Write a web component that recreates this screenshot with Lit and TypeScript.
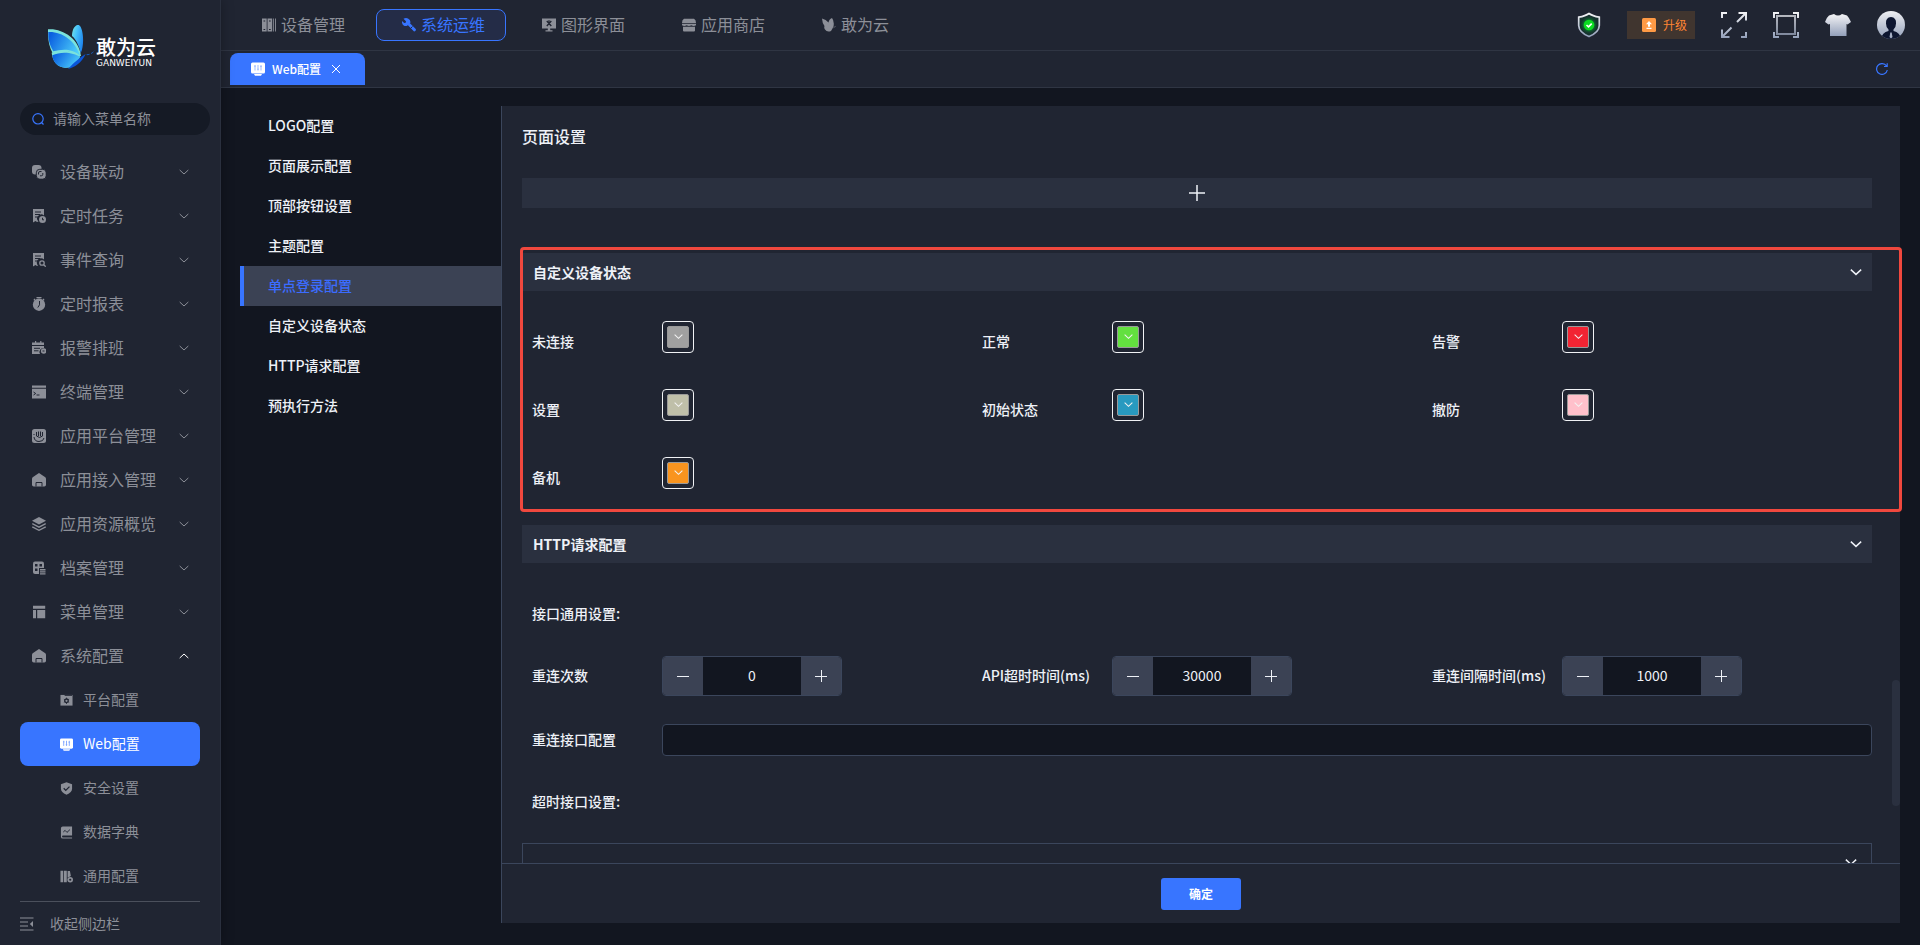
import { LitElement, html, svg, css } from "lit";
import { customElement, state } from "lit/decorators.js";
import { classMap } from "lit/directives/class-map.js";
import { styleMap } from "lit/directives/style-map.js";

const svgIcon = (body: unknown, size = 14, box = "0 0 14 14") =>
  html`<svg class="icon" width=${size} height=${size} viewBox=${box} fill="currentColor" aria-hidden="true">${body}</svg>`;

/* Filled 14-unit glyphs; details inside a shape use class "cs"/"cf" (background colour). */
const glyphs: Record<string, unknown> = {
  link: svg`<rect x="0" y="0" width="9.500" height="9.500" rx="3"/><rect class="cutline" x="4.300" y="4.300" width="9.900" height="9.900" rx="3.500"/><path class="cs" d="M6.500 9.500V8q0-1.500 1.500-1.500h1.500M10.800 8v1.300q0 1.500-1.500 1.500H8"/>`,
  task: svg`<path d="M1 0h11v6.500A4 4 0 0 0 6.500 12.500L5 13l-1.500-1-2.500 1.500z"/><path class="cs" d="M3 3h6M3 5.500h5M3 8h3"/><circle cx="10.500" cy="10.500" r="3.500"/><path class="cs" d="M10.500 8.800v2h1.500"/>`,
  query: svg`<path d="M1 0h11v6.500A4 4 0 0 0 6 12.500L5 13l-1.500-1-2.500 1.500z"/><path class="cs" d="M3 3h6M3 5.500h5M3 8h3"/><circle class="ls" cx="10" cy="10" r="2.200"/><path class="ls" d="M11.700 11.700l2 2"/>`,
  timer: svg`<path d="M4.500 0h5v1.200h-5zM1.500 2.500l1-1 1 1-1 1zM10.500 2.500l1-1 1 1-1 1z"/><circle cx="7" cy="7.700" r="6.200"/><path class="cs" d="M7.500 4v3.800L5.800 10.500"/>`,
  shift: svg`<path d="M0 1.500h3V0h1.200v1.500h4V0h1.200v1.500H12V7A4 4 0 0 0 8 13H0z"/><path class="cs" d="M0 4.500h12M2 7.300h6M2 9.800h4.500"/><circle cx="11.700" cy="10" r="2.800"/><path class="cs" d="M10.500 10h2"/>`,
  terminal: svg`<path d="M0 .5h14v2.300H0zM0 3.800h14v9.700H0z"/><path class="cs" d="M1.500 7l2.200 1.500-2.200 1.500M4.500 10h3"/>`,
  platform: svg`<rect width="14" height="14" rx="2.500"/><path class="cs" d="M4.500 3v4M6.500 2.500V7M8.500 2.500V7M10.500 3v4M4.500 7q3 3 6 0M2 8q.5 4.500 5 4.500t5-3.500M2 5v1"/>`,
  home: svg`<path d="M7 0l6.300 4.300q.7.500.7 1.500v6q0 1.700-1.700 1.700H1.700Q0 13.500 0 11.800v-6q0-1 .7-1.500z"/><path class="cs" d="M4 13.500v-4h6v4"/>`,
  layers: svg`<path d="M7 0l7 3.700-7 3.700-7-3.700z"/><path class="ls" d="M.3 6.700L7 10.200l6.700-3.500M.3 9.800L7 13.300l6.700-3.500"/>`,
  archive: svg`<rect x="1" y=".5" width="11" height="12.500" rx="2"/><path class="cf" d="M3 3h2.500v2.500H3zM7.500 3H10v2.500H7.500zM3 7.500h2.500V10H3zM7 7h7v7H7z"/><path d="M8 8h5.500v1.600H8zM8 10.200h5.500v1.400H8zM8 12.200h5.500v1.300H8z"/>`,
  menu: svg`<path d="M1 .7h12.200v3H1zM1 5h3v8.300H1zM5.200 5h8v8.300h-8z"/>`,
  gearbox: svg`<path d="M.5 1h13v11.500H.5z"/><path class="cs" d="M5 1.500h8"/><circle class="cs2" cx="7" cy="7.300" r="1.900"/><path class="cs" d="M7 4v1.200M7 9.400v1.200M4.200 5.700l1 .6M8.800 8.300l1 .6M4.200 8.900l1-.6M8.800 6.300l1-.6"/>`,
  web: svg`<rect x="0" y=".5" width="14" height="11" rx="1.500"/><path d="M3 12h8l-1 1.700H4z"/><path class="cs" d="M4 3v5.500M7 3v5.500M10 3v5.500M3.200 4.200h1.600M6.200 7.200h1.600M9.200 4.500h1.600"/>`,
  shield: svg`<path d="M7 .3l6 2v5q0 4-6 6.400-6-2.400-6-6.400v-5z"/><path class="cs2" d="M4 6.800l2.200 2.200L10.200 5"/>`,
  dict: svg`<path d="M3 .5h10v9.800H3.200a1 1 0 0 0 0 2H13v1.200H3A2 2 0 0 1 1 11.500v-9Q1 .5 3 .5z"/><path class="cs" d="M3.500 6.500l2-1.800 2 2.200 3.200-3"/>`,
  books: svg`<path d="M.5.8h3v12.500h-3zM4.300.8h3v12.500h-3zM8.200 1h2.500l1 5.500-3.500 1.800z"/><circle cx="11" cy="10.500" r="3"/><circle class="cf" cx="11" cy="10.500" r="1.200"/>`,
  device: svg`<path d="M0 .5h4.700v13H0zM5.500.5h4.700v13H5.500zM11.200.5H12v13h-.8zM13 .5h.9v13H13z"/><path class="cs" d="M1.500 3h1.700M7 3h1.700M1.500 11.500h1.700M7 11.500h1.700"/>`,
  wrench: svg`<path d="M1.500.8L4 3.200l-.3 1.600-1.500.3L0 3q-.4 3.400 2 4.700 1.700.7 3.200.1l1.500-1.500L8.500 4.500Q8.600 1.500 6 .4 3.500-.4 1.500.8z"/><path d="M5.500 6.800l2-2 6 6q1 1.200-.2 2.200t-2-.2z"/><path class="cs" d="M8.500 10.500l2-2"/>`,
  graphic: svg`<path d="M0 .5h14v10H8.200v1.800H10.500v1.200h-7v-1.200h2.300v-1.800H0z"/><path class="cs2" d="M4.800 3l4.500 5M9.300 3L4.800 8M7 2.300v1.500"/>`,
  store: svg`<path d="M2 .8h10q2 1 2 4.200H0Q0 1.800 2 .8zM0 5.800h14v1.500q-2.300 1.500-4.700 0-2.300 1.500-4.600 0-2.400 1.500-4.700 0zM1 8.800h12v3.700q0 1-1 1H2q-1 0-1-1z"/>`,
  bird: svg`<path d="M0 .5Q4 1.300 6.500 4.500 7 1 10 0q2.500 3 1.500 8.500L10.200 11 9 13q-4 1.500-6-1.500Q1.800 10 2.500 8 .3 5.500 0 .5z"/><path class="faint" d="M10.500 10.500Q12 8 14.500 7.800q-1 1.800-4 2.700z"/>`,
};

const glyph = (name: string, size = 14) => svgIcon(glyphs[name], size);

const chevron = (w: number, up = false, stroke = 1) => html`
  <svg class="icon" width=${w} height=${w} viewBox="0 0 10 10" fill="none" stroke="currentColor" stroke-width=${stroke} aria-hidden="true">
    <path d=${up ? "M.7 7L5 3l4.300 4" : "M.7 3L5 7l4.300-4"}></path>
  </svg>`;

interface MenuEntry { label: string; icon: string; open?: boolean; }

const MENU: MenuEntry[] = [
  { label: "设备联动", icon: "link" },
  { label: "定时任务", icon: "task" },
  { label: "事件查询", icon: "query" },
  { label: "定时报表", icon: "timer" },
  { label: "报警排班", icon: "shift" },
  { label: "终端管理", icon: "terminal" },
  { label: "应用平台管理", icon: "platform" },
  { label: "应用接入管理", icon: "home" },
  { label: "应用资源概览", icon: "layers" },
  { label: "档案管理", icon: "archive" },
  { label: "菜单管理", icon: "menu" },
  { label: "系统配置", icon: "home", open: true },
];

const SUBMENU: MenuEntry[] = [
  { label: "平台配置", icon: "gearbox" },
  { label: "Web配置", icon: "web" },
  { label: "安全设置", icon: "shield" },
  { label: "数据字典", icon: "dict" },
  { label: "通用配置", icon: "books" },
];

const TOP_NAV: MenuEntry[] = [
  { label: "设备管理", icon: "device" },
  { label: "系统运维", icon: "wrench" },
  { label: "图形界面", icon: "graphic" },
  { label: "应用商店", icon: "store" },
  { label: "敢为云", icon: "bird" },
];

const SECTIONS = ["LOGO配置", "页面展示配置", "顶部按钮设置", "主题配置", "单点登录配置", "自定义设备状态", "HTTP请求配置", "预执行方法"];

const STATUSES = [
  { label: "未连接", color: "#a0a0a0" },
  { label: "正常", color: "#63e03f" },
  { label: "告警", color: "#f22433" },
  { label: "设置", color: "#bfbfa9" },
  { label: "初始状态", color: "#289ac0" },
  { label: "撤防", color: "#ffc0cb" },
  { label: "备机", color: "#f9941e" },
];

const NUMBERS = [
  { label: "重连次数", value: 0 },
  { label: "API超时时间(ms)", value: 30000 },
  { label: "重连间隔时间(ms)", value: 1000 },
];

const base = css`
  *, *::before, *::after { box-sizing: border-box; }
  button, input { font: inherit; color: inherit; margin: 0; padding: 0; border: 0; background: none; outline: none; }
  button { cursor: pointer; }
  a { color: inherit; text-decoration: none; }
  .icon { display: block; flex: none; }
  .cs, .cs2 { fill: none; stroke: var(--cut, #202532); stroke-width: 1; }
  .cs2 { stroke-width: 1.4; }
  .cf { fill: var(--cut, #202532); }
  .cutline { stroke: var(--cut, #202532); stroke-width: 1; }
  .ls { fill: none; stroke: currentColor; stroke-width: 1.3; }
  .faint { opacity: 0.4; }
`;

@customElement("side-bar")
class SideBar extends LitElement {
  static styles = [base, css`
    :host {
      display: flex; flex-direction: column; width: 221px; position: relative; z-index: 1;
      background: #202532; border-right: 1px solid #2a303e; color: #8c8f98;
      box-shadow: 0 0 12px rgba(0, 0, 0, 0.3);
    }
    .logo { display: flex; padding: 25px 0 0 48px; height: 103px; }
    .words { display: flex; flex-direction: column; padding-top: 10px; color: #fff; }
    .name { font-size: 20px; line-height: 23px; font-weight: 500; }
    .latin { font: 9px/10px "DejaVu Sans", sans-serif; }
    .search { display: flex; align-items: center; gap: 9px; height: 32px; margin: 0 10px 15px 20px; padding: 0 12px; border-radius: 16px; background: #151a25; }
    .search .icon { color: #3875ff; }
    .search input { width: 100%; min-width: 0; padding-bottom: 2px; font-size: 14px; }
    .search input::placeholder { color: #8c8f98; opacity: 1; }
    nav { flex: 1; min-height: 0; overflow: hidden; }
    .item { display: flex; align-items: center; gap: 14px; width: 180px; height: 44px; margin-left: 20px; padding: 0 11px 0 12px; font-size: 16px; text-align: left; }
    .item span, .sub span { flex: 1; padding-bottom: 2px; }
    .item.open .arrow { color: #fff; }
    .arrow { display: flex; }
    .sub { display: flex; align-items: center; gap: 10px; width: 180px; height: 44px; margin-left: 20px; padding-left: 40px; font-size: 14px; border-radius: 8px; }
    .sub.active { background: #3875ff; color: #fff; --cut: #7fa5ff; }
    .collapse { display: flex; align-items: center; gap: 16px; width: 180px; height: 44px; margin-left: 20px; border-top: 1px solid #4b505c; font-size: 14px; }
  `];

  render() {
    return html`
      <div class="logo">
        <svg class="icon" width="48" height="44" viewBox="144 75 144 132" aria-hidden="true">
          <defs>
            <linearGradient id="w" x1="0" y1="0.300" x2="1" y2="0.700"><stop offset="0" stop-color="#0a5fe0"></stop><stop offset="1" stop-color="#4fd2fb"></stop></linearGradient>
            <linearGradient id="u" x1="0" y1="0" x2="1" y2="0.600"><stop offset="0" stop-color="#7be3dc"></stop><stop offset="0.400" stop-color="#48c4fa"></stop><stop offset="1" stop-color="#1f85ee"></stop></linearGradient>
          </defs>
          <path fill="url(#u)" d="M232 75C222 78 216 92 216 108C230 120 238 140 242 160C253 138 251 92 240 78Q236 73 232 75z"></path>
          <path fill="#7be3dc" d="M144 88C186 84 238 116 243 168L232 170C214 150 186 150 158 160C146 138 143 112 144 88z"></path>
          <path fill="url(#w)" d="M145 96C186 94 226 122 240 167C214 144 186 148 160 154C148 134 144 116 145 96z"></path>
          <path fill="#7be3dc" d="M155 158C182 146 226 152 240 170C230 194 214 204 195 203C174 202 157 184 155 158z"></path>
          <path fill="url(#w)" d="M157 166C184 152 222 158 240 170C230 194 214 204 195 203C174 202 159 188 157 166z"></path>
          <path fill="#0a55d8" d="M204 207C222 203 246 188 257 162C246 168 222 186 204 207z"></path>
          <path stroke="#1567d8" stroke-width="2.500" stroke-dasharray="9 5" fill="none" d="M260 164Q272 165 285 151"></path>
        </svg>
        <div class="words"><span class="name">敢为云</span><span class="latin">GANWEIYUN</span></div>
      </div>
      <label class="search">
        <svg class="icon" width="12" height="12" viewBox="0 0 12 12" fill="none" stroke="currentColor" stroke-width="1.200" aria-hidden="true"><circle cx="6" cy="5.800" r="5.200"></circle><path d="M9.500 9.500l2 2"></path></svg>
        <input type="text" placeholder="请输入菜单名称" aria-label="请输入菜单名称">
      </label>
      <nav>
        ${MENU.map((m) => html`
          <button class=${classMap({ item: true, open: !!m.open })}>${glyph(m.icon)}<span>${m.label}</span><i class="arrow">${chevron(10, m.open)}</i></button>`)}
        ${SUBMENU.map((m) => html`
          <a href="#" class=${classMap({ sub: true, active: m.icon === "web" })}>${glyph(m.icon, 13)}<span>${m.label}</span></a>`)}
      </nav>
      <button class="collapse">
        <svg class="icon" width="14" height="14" viewBox="0 0 14 14" fill="none" stroke="currentColor" stroke-width="1.200" aria-hidden="true"><path d="M0 1h13.500M0 5h8M0 9h8M0 13h13.500"></path><path fill="currentColor" stroke="none" d="M13 4v6L9.800 7z"></path></svg>
        <span>收起侧边栏</span>
      </button>`;
  }
}

@customElement("top-bar")
class TopBar extends LitElement {
  static styles = [base, css`
    :host { display: block; background: #202532; color: #8c8f98; }
    .row { display: flex; align-items: center; border-bottom: 1px solid #2f3543; }
    .main { height: 51px; padding: 0 15px 1px 15px; }
    nav { display: flex; gap: 10px; flex: 1; }
    .link { display: flex; align-items: center; gap: 5px; height: 32px; padding: 0 20px 0 25px; border: 1px solid transparent; border-radius: 8px; font-size: 16px; }
    .link span { padding-bottom: 2px; }
    .link.active { color: #3875ff; border-color: #3875ff; background: #242c47; --cut: #242c47; }
    .tools { display: flex; align-items: center; gap: 26px; }
    .tools button { display: flex; align-items: center; }
    .tools .upgrade { gap: 7px; width: 68px; height: 28px; padding-left: 15px; background: #40352f; color: #ff8533; font-size: 12px; }
    .tabs { height: 37px; align-items: flex-start; padding: 2px 32px 2px 9px; }
    .tab { display: flex; align-items: center; width: 135px; height: 32px; padding-left: 21px; border-radius: 8px 8px 0 0; background: #3875ff; color: #fff; font-size: 12px; font-weight: 500; --cut: #9dbaff; }
    .tab span { margin: 0 11px 0 7px; }
    .refresh { margin-left: auto; align-self: center; color: #3875ff; }
  `];

  render() {
    return html`
      <div class="row main">
        <nav>${TOP_NAV.map((m) => html`<a href="#" class=${classMap({ link: true, active: m.icon === "wrench" })}>${glyph(m.icon)}<span>${m.label}</span></a>`)}</nav>
        <div class="tools">
          <button aria-label="安全">
            <svg class="icon" width="24" height="26" viewBox="0 0 24 26" aria-hidden="true">
              <defs>
                <linearGradient id="m" x1="0" y1="0" x2="0" y2="1"><stop offset="0" stop-color="#f4f4f6"></stop><stop offset="1" stop-color="#93a0ba"></stop></linearGradient>
                <radialGradient id="g"><stop offset="0.500" stop-color="#0b8f2d"></stop><stop offset="1" stop-color="#12352e" stop-opacity="0.400"></stop></radialGradient>
              </defs>
              <path d="M12 1.500Q15.500 4 22.300 5.200V13.500Q22 20.500 12 24.500 2 20.500 1.700 13.500V5.200Q8.500 4 12 1.500z" fill="#17332f" stroke="url(#m)" stroke-width="1.700"></path>
              <circle cx="12" cy="13" r="8.500" fill="url(#g)"></circle><circle cx="12" cy="13" r="5.300" fill="#0bdc22"></circle>
              <path d="M9.500 13l2 1.800 3.200-3.200" fill="none" stroke="#fff" stroke-width="1.600"></path>
            </svg>
          </button>
          <button class="upgrade">
            <svg class="icon" width="14" height="14" viewBox="0 0 14 14" aria-hidden="true"><rect width="14" height="14" rx="1.500" fill="#ff9a45"></rect><path fill="#fff" d="M7 3l3 3.200H8v2.600H6V6.200H4zM4.500 9.800h5v1.200h-5z"></path></svg>
            <span>升级</span>
          </button>
          <button aria-label="全屏">
            <svg class="icon" width="26" height="26" viewBox="0 0 26 26" fill="none" stroke="url(#f)" stroke-width="2" aria-hidden="true">
              <defs><linearGradient id="f" gradientUnits="userSpaceOnUse" x1="0" y1="0" x2="0" y2="26"><stop offset="0" stop-color="#f4f4f6"></stop><stop offset="1" stop-color="#93a0ba"></stop></linearGradient></defs>
              <path d="M1 6V1H6M17.500 1H25V8.500M25 1L16 10M1 17.500V25H8.500M1 25L10.500 15.500M20 25H25V20"></path>
            </svg>
          </button>
          <button aria-label="框选">
            <svg class="icon" width="26" height="26" viewBox="0 0 26 26" fill="none" stroke="url(#k)" stroke-width="2" aria-hidden="true">
              <defs><linearGradient id="k" gradientUnits="userSpaceOnUse" x1="0" y1="0" x2="0" y2="26"><stop offset="0" stop-color="#f4f4f6"></stop><stop offset="1" stop-color="#93a0ba"></stop></linearGradient></defs>
              <path d="M1 6V1H6M20 1H25V6M1 20V25H6M20 25H25V20"></path><path opacity="0.750" d="M4 4H22V22H4z"></path>
            </svg>
          </button>
          <button aria-label="主题">
            <svg class="icon" width="26" height="24" viewBox="0 0 26 24" aria-hidden="true">
              <defs><linearGradient id="t" x1="0" y1="0" x2="0" y2="1"><stop offset="0" stop-color="#f4f4f6"></stop><stop offset="1" stop-color="#93a0ba"></stop></linearGradient></defs>
              <path fill="url(#t)" d="M9 1Q13 4 17 1L22 2.500Q24 4.500 26 9L22.500 11.500 21.500 11V23H5V11L3.500 11.500 0 9Q1.500 4.500 4 2.500z"></path>
            </svg>
          </button>
          <button aria-label="用户">
            <svg class="icon" width="28" height="28" viewBox="0 0 28 28" aria-hidden="true">
              <defs><linearGradient id="a" x1="0" y1="0" x2="0" y2="1"><stop offset="0" stop-color="#eeeff2"></stop><stop offset="1" stop-color="#93a0ba"></stop></linearGradient><clipPath id="c"><circle cx="14" cy="14" r="14"></circle></clipPath></defs>
              <circle cx="14" cy="14" r="14" fill="url(#a)"></circle>
              <path clip-path="url(#c)" fill="#0d1630" d="M14 6Q19.500 6.500 19 12.500 19 16.500 16.500 18.500V20Q23 21.500 24 28H4Q5 21.500 11.500 20V18.500Q9 16.500 9 12.500 8.500 6.500 14 6z"></path>
              <path fill="#a5afc4" d="M13.300 21.500h1.400l.8 4.500-1.500 1.500-1.500-1.500z"></path>
            </svg>
          </button>
        </div>
      </div>
      <div class="row tabs">
        <div class="tab">${glyph("web")}<span>Web配置</span>
          <button aria-label="关闭"><svg class="icon" width="8" height="8" viewBox="0 0 8 8" stroke="currentColor" aria-hidden="true"><path d="M0 0l8 8M8 0L0 8"></path></svg></button>
        </div>
        <button class="refresh" aria-label="刷新"><svg class="icon" width="12" height="12" viewBox="0 0 12 12" fill="none" stroke="currentColor" stroke-width="1.200" aria-hidden="true"><path d="M11.300 7A5.400 5.400 0 1 1 10.500 3M11.200.3v3.200H8"></path></svg></button>
      </div>`;
  }
}

@customElement("settings-panel")
class SettingsPanel extends LitElement {
  @state() private values = NUMBERS.map((n) => n.value);

  private step(i: number, by: number) {
    this.values = this.values.map((v, k) => (k === i ? Math.max(0, v + by) : v));
  }

  static styles = [base, css`
    :host { display: flex; flex-direction: column; position: relative; min-width: 0; min-height: 0; background: #202532; border-left: 1px solid #3b465c; color: #eef1f7; font-size: 14px; font-weight: 500; }
    .scroll { flex: 1; min-height: 0; overflow-x: visible; overflow-y: clip; padding: 19px 28px 0 20px; }
    h1 { margin: 0; padding-bottom: 2px; font-size: 16px; line-height: 22px; font-weight: 500; }
    .add { display: flex; align-items: center; justify-content: center; width: 100%; height: 30px; margin: 29px 0 45px; background: #2a303f; }
    .head { display: flex; align-items: center; justify-content: space-between; width: 100%; height: 38px; padding: 0 10px 0 11px; background: #2a303f; font-weight: 700; }
    .grid { display: grid; grid-template-columns: repeat(3, 1fr); row-gap: 36px; margin: 30px 0 36px; }
    .field { display: flex; align-items: center; }
    .field label, .caption { line-height: 20px; padding: 0 0 2px 10px; }
    .field label { width: 140px; flex: none; white-space: nowrap; }
    .grid .field { align-items: flex-end; }
    .swatch { width: 32px; height: 32px; padding: 4px; border: 1px solid #f0f2f5; border-radius: 4px; }
    .fill { display: flex; justify-content: center; width: 22px; height: 22px; padding-top: 5px; border: 1px solid #999; border-radius: 2px; color: #f2f2f2; }
    .caption { margin: 40px 0 31px; }
    .numbers { display: grid; grid-template-columns: repeat(3, 1fr); }
    .stepper { display: flex; width: 180px; height: 40px; border: 1px solid #3b465c; border-radius: 4px; overflow: hidden; background: #121620; }
    .stepper button { display: flex; align-items: center; justify-content: center; width: 40px; flex: none; background: #3b4254; }
    .stepper input { flex: 1; min-width: 0; padding-bottom: 2px; text-align: center; font-weight: 400; }
    .wide { margin: 28px 0 35px; }
    .wide input { flex: 1; height: 32px; padding: 0 11px; border: 1px solid #3b465c; border-radius: 4px; background: #121620; }
    .caption.second { margin: 0 0 30px; }
    .fold { display: flex; align-items: center; justify-content: flex-end; width: 100%; height: 38px; padding-right: 14px; border: 1px solid #3b465c; }
    .foot { display: flex; flex: none; align-items: center; justify-content: center; height: 60px; border-top: 1px solid #3b465c; }
    .ok { width: 80px; height: 32px; border-radius: 3px; background: #3875ff; color: #fff; font-size: 12px; font-weight: 700; }
    .thumb { position: absolute; right: 0; top: 574px; width: 8px; height: 126px; border-radius: 4px; background: #2a303f; }
    .mark { position: relative; }
    .mark::after { content: ""; position: absolute; inset: -6px -30px -23px -2px; border: 3px solid #f0483e; border-radius: 4px; pointer-events: none; }
  `];

  render() {
    return html`
      <div class="scroll">
        <h1>页面设置</h1>
        <button class="add" aria-label="添加"><svg class="icon" width="16" height="16" viewBox="0 0 16 16" stroke="currentColor" stroke-width="1.500" aria-hidden="true"><path d="M8 0v16M0 8h16"></path></svg></button>
        <section class="mark">
          <button class="head"><span>自定义设备状态</span>${chevron(12, false, 1.2)}</button>
          <div class="grid">
            ${STATUSES.map((s, i) => html`
              <div class="field"><label for="s${i}">${s.label}</label>
                <button class="swatch" id="s${i}"><span class="fill" style=${styleMap({ backgroundColor: s.color })}>${chevron(9, false, 1.2)}</span></button>
              </div>`)}
          </div>
        </section>
        <section>
          <button class="head"><span>HTTP请求配置</span>${chevron(12, false, 1.2)}</button>
          <div class="caption">接口通用设置:</div>
          <div class="numbers">
            ${NUMBERS.map((n, i) => html`
              <div class="field"><label for="n${i}">${n.label}</label>
                <div class="stepper">
                  <button aria-label="减少" @click=${() => this.step(i, -1)}><svg class="icon" width="12" height="12" viewBox="0 0 12 12" stroke="currentColor" aria-hidden="true"><path d="M0 6.500h12"></path></svg></button>
                  <input id="n${i}" type="text" inputmode="numeric" .value=${String(this.values[i])}>
                  <button aria-label="增加" @click=${() => this.step(i, 1)}><svg class="icon" width="12" height="12" viewBox="0 0 12 12" stroke="currentColor" aria-hidden="true"><path d="M0 6.500h12M6.500 0v12"></path></svg></button>
                </div>
              </div>`)}
          </div>
          <div class="field wide"><label for="api">重连接口配置</label><input id="api" type="text"></div>
          <div class="caption second">超时接口设置:</div>
          <button class="fold" aria-label="展开">${chevron(12, false, 1.2)}</button>
        </section>
      </div>
      <div class="foot"><button class="ok">确定</button></div>
      <div class="thumb"></div>`;
  }
}

@customElement("app-root")
class AppRoot extends LitElement {
  @state() private section = 4;

  static styles = [base, css`
    :host { display: grid; grid-template-columns: auto 1fr; grid-template-rows: minmax(0, 1fr); height: 100vh; background: #121620; font-family: "Noto Sans CJK SC", "Noto Sans", sans-serif; line-height: 1.5; }
    .page { display: flex; flex-direction: column; min-width: 0; min-height: 0; }
    .body { display: grid; grid-template-columns: 261px 1fr; grid-template-rows: minmax(0, 1fr); flex: 1; min-height: 0; padding: 18px 20px 22px 19px; }
    .entry { display: block; width: 100%; height: 40px; padding: 0 0 1px 24px; border-left: 4px solid transparent; color: #eef1f7; font-size: 14px; font-weight: 500; text-align: left; }
    .entry.active { background: #3b4254; border-color: #3875ff; color: #3b6cff; }
  `];

  render() {
    return html`
      <side-bar></side-bar>
      <div class="page">
        <top-bar></top-bar>
        <div class="body">
          <nav>${SECTIONS.map((s, i) => html`<button class=${classMap({ entry: true, active: i === this.section })} @click=${() => (this.section = i)}>${s}</button>`)}</nav>
          <settings-panel></settings-panel>
        </div>
      </div>`;
  }
}
